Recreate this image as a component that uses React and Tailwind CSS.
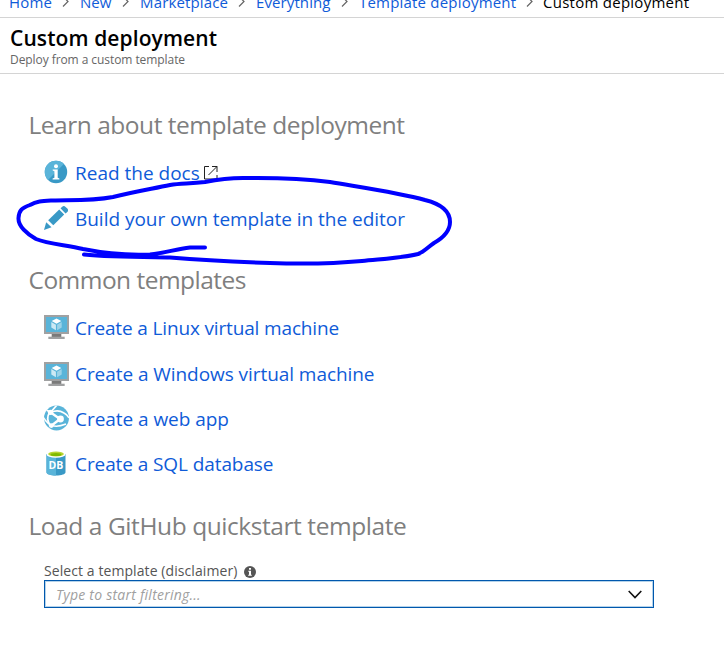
import React from 'react';

function Sep() {
  return (
    <svg className="mb-[2px] ml-[10px] mr-[9px] h-[11px] w-[7px] shrink-0" viewBox="0 0 7 11" fill="none" stroke="#666" strokeWidth="1.200">
      <path d="M1 .5l5 5-5 5" />
    </svg>
  );
}

function InfoIcon() {
  return (
    <svg className="mb-[2px] h-6 w-6" viewBox="0 0 24 24">
      <circle cx="12" cy="12" r="11.2" fill="#3999c6" />
      <path d="M4 19.900A11.200 11.200 0 0 1 19.900 4z" fill="#5ab4d9" />
      <circle cx="12" cy="6.200" r="2" fill="#fff" />
      <path d="M8.700 9.600h5v8.200l1.700.6v1H8.600v-1l1.800-.6v-6.600l-1.700-.6z" fill="#fff" />
    </svg>
  );
}

function PencilIcon() {
  return (
    <svg className="mb-[3px] h-6 w-6" viewBox="0 0 24 24" fill="#3999c6">
      <path d="M2.200 16.300L0 24l7.500-2.700z" />
      <path d="M4.200 14.200L15.200 3.600l5 5L9.300 19.300z" />
      <path d="M16.500 2.300L18 .9a2.600 2.600 0 0 1 3.600 0L23.300 2.600a2.600 2.600 0 0 1 0 3.500L21.500 7.500z" />
    </svg>
  );
}

function MonitorIcon() {
  return (
    <svg className="mb-[2px] ml-px h-6 w-[25px]" viewBox="0 0 26 24" preserveAspectRatio="none">
      <path d="M8 19h10v3H8z" fill="#7a7a7a" />
      <path d="M4.500 21.700h17V24h-17z" fill="#a0a1a2" />
      <path d="M0 0h26v19H0z" fill="#a0a1a2" />
      <path d="M2 2h22v15H2z" fill="#59b4d9" />
      <path d="M13 3.400l5 2.700-5 2.700-5-2.700z" fill="#fff" />
      <path d="M7.600 7l4.800 2.700v5.600l-4.800-2.700z" fill="#cce9f4" />
      <path d="M18.400 7l-4.800 2.700v5.600l4.800-2.700z" fill="#9bd2e8" />
    </svg>
  );
}

function WebIcon() {
  return (
    <svg className="mb-[3px] h-[26px] w-[26px]" viewBox="0 0 26 26">
      <defs>
        <clipPath id="globe"><circle cx="13.500" cy="13" r="12.500" /></clipPath>
      </defs>
      <circle cx="13.500" cy="13" r="12.500" fill="#59b4d9" />
      <g clipPath="url(#globe)">
        <g fill="none" stroke="#fff">
          <path d="M8 7.500C12 5.500 17 5.500 21 8C23 9 25 11 26 13" strokeWidth="1.600" />
          <path d="M7 7C4 11 4 16 7.500 21" strokeWidth="1.800" />
          <path d="M7 7L17 14" strokeWidth="2.400" />
          <path d="M0 12C3 17 5 19 9 20.500C13 22 18 21 23 19" strokeWidth="1.600" />
          <path d="M17 14L8 21" strokeWidth="2.400" />
          <path d="M7.500 7.500L14 0" strokeWidth="1.800" />
          <path d="M2 4L7.500 7.500" strokeWidth="1.800" />
        </g>
        <circle cx="7.500" cy="7.300" r="2.600" fill="#fff" />
        <circle cx="17.500" cy="14" r="3.400" fill="#fff" />
        <circle cx="8.300" cy="20.600" r="2.400" fill="#fff" />
      </g>
    </svg>
  );
}

function DbIcon() {
  return (
    <svg className="mb-[3px] h-[26px] w-5" viewBox="0 0 20 26">
      <path d="M.5 4v18.300C.5 24.300 4.500 25.500 10 25.500s9.500-1.200 9.500-3.200V4z" fill="#3999c6" />
      <path d="M.5 4v18.300C.5 24.300 4.500 25.500 10 25.500V4z" fill="#59b4d9" />
      <ellipse cx="10" cy="4.200" rx="9.500" ry="3.600" fill="#fff" />
      <ellipse cx="10" cy="4" rx="7.800" ry="2.600" fill="#b8d432" />
      <ellipse cx="10" cy="4.600" rx="5.500" ry="1.500" fill="#7fba00" />
      <text x="10" y="18.600" textAnchor="middle" fontFamily="Open Sans, sans-serif" fontWeight="700" fontSize="10.500" fill="#fff">DB</text>
    </svg>
  );
}

function ExternalIcon() {
  return (
    <svg className="mb-px ml-[4px] h-[14px] w-[14px]" viewBox="0 0 14 14" fill="none" stroke="#222" strokeWidth="1">
      <path d="M5 .5H.5v12.500h12.500V9M8 .5h5V6M13 .5L4.500 9" />
    </svg>
  );
}

function Heading({ children, className }) {
  return <h2 className={`ml-[28.5px] h-8 whitespace-nowrap text-[24.5px] leading-[34px] text-[#7f7f7f] ${className}`}>{children}</h2>;
}

function LinkRow({ icon, children, className, text = '' }) {
  return (
    <a className={`flex items-center whitespace-nowrap text-[19px] text-[#0f5bd8] ${className}`}>
      <span className="flex w-[26px] shrink-0 justify-center">{icon}</span>
      <span className={`ml-[6px] ${text}`}>{children}</span>
    </a>
  );
}

export default function App() {
  return (
    <div className="relative flex h-[654px] w-[724px] flex-col overflow-hidden bg-white font-['Open_Sans',sans-serif]">
      <nav className="flex h-[18px] shrink-0 items-end overflow-hidden border-b border-[#d4d4d4] pl-[9px]">
        <div className="mb-[3px] flex h-[24px] shrink-0 items-center whitespace-nowrap text-[15px] leading-6 text-[#0f5bd8]">
          <span className="w-[43px] tracking-[0.2px]">Home</span><Sep />
          <span className="ml-[2px] w-[32px]">New</span><Sep />
          <span className="ml-[2px] w-[88px] tracking-[0.15px]">Marketplace</span><Sep />
          <span className="ml-[2px] w-[75px] tracking-[0.1px]">Everything</span><Sep />
          <span className="ml-[2px] w-[157px] tracking-[0.2px]">Template deployment</span><Sep />
          <span className="ml-px tracking-[0.26px] text-black">Custom deployment</span>
        </div>
      </nav>
      <header className="flex h-[56px] shrink-0 flex-col border-b border-[#d4d4d4] pl-[10px]">
        <h1 className="mt-[6px] h-[28px] whitespace-nowrap text-[21px] font-semibold leading-[28px] tracking-[0.1px] text-black">Custom deployment</h1>
        <p className="h-4 whitespace-nowrap text-[12px] leading-4 tracking-[-0.07px] text-[#666]">Deploy from a custom template</p>
      </header>

      <main className="flex flex-col pt-[34px]">
        <Heading className="tracking-[-0.48px]">Learn about template deployment</Heading>
        <div className="mt-[10px] flex flex-col pl-[43px]">
          <LinkRow icon={<InfoIcon />} className="h-[46px]">
            <span className="flex items-center">Read the docs<ExternalIcon /></span>
          </LinkRow>
          <LinkRow icon={<PencilIcon />} className="h-[46px]" text="tracking-[-0.03px]">Build your own template in the editor</LinkRow>
        </div>

        <Heading className="mt-[21px] tracking-[-0.53px]">Common templates</Heading>
        <div className="mt-[10px] flex flex-col pl-[43px]">
          <LinkRow icon={<MonitorIcon />} className="mb-px h-[46px]" text="tracking-[-0.15px]">Create a Linux virtual machine</LinkRow>
          <LinkRow icon={<MonitorIcon />} className="h-[45px]" text="tracking-[-0.06px]">Create a Windows virtual machine</LinkRow>
          <LinkRow icon={<WebIcon />} className="h-[45px]" text="tracking-[-0.05px]">Create a web app</LinkRow>
          <LinkRow icon={<DbIcon />} className="h-[45px]" text="tracking-[-0.09px]">Create a SQL database</LinkRow>
        </div>

        <Heading className="mt-[22px] tracking-[-0.43px]">Load a GitHub quickstart template</Heading>
        <div className="ml-[44px] mt-[19px] w-[610px]">
          <label className="flex h-5 items-center whitespace-nowrap pt-[2px] text-[14px] leading-[18px] tracking-[0.08px] text-[#555]">
            Select a template (disclaimer)
            <svg className="ml-[7px] mt-[2px] h-3 w-3" viewBox="0 0 12 12">
              <circle cx="6" cy="6" r="6" fill="#555" />
              <path d="M5 2h2v1.700H5zM4.300 4.800H7v3.900h.8v1H4.200v-1H5V5.800h-.7z" fill="#fff" />
            </svg>
          </label>
          <div className="flex h-7 items-center justify-between border border-[#0058ad] pl-[11px] pr-[11px] shadow-[inset_0_0_0_1px_#b5d3ea]">
            <span className="text-[14px] italic tracking-[0.24px] text-[#a0a0a0]">Type to start filtering...</span>
            <svg className="h-[9px] w-[14px]" viewBox="0 0 14 9" fill="none" stroke="#111" strokeWidth="1.600">
              <path d="M.7 1L7 7.500 13.300 1" />
            </svg>
          </div>
        </div>
      </main>

      <svg className="pointer-events-none absolute left-0 top-0 h-[654px] w-[724px]" viewBox="0 0 724 654" fill="none" stroke="#00f" strokeWidth="4" strokeLinecap="round" strokeLinejoin="round">
        <path d="M205 247.500H190C176 249 165 253 150 254.500C128 255.500 103 253 83 249C66 245 48 244 36 239C27 234 18 226 18.500 218C19 210 22 208 30 205C37 201 43 201 53 200.500C73 200 92 201 113 197C133 192 151 189 170 185C181 183 189 184 205 182C220 179 230 178 243 178C275 177.500 300 178 330 182C365 188 400 193 425 200C441 204 450 211 450 222C450 233 441 239 434 243C428 247 424 252 418 254C402 258 380 259 362 261C330 264 300 264 270 263C240 262 200 260 170 257.500C140 257 110 257 84 254.500" />
      </svg>
    </div>
  );
}
